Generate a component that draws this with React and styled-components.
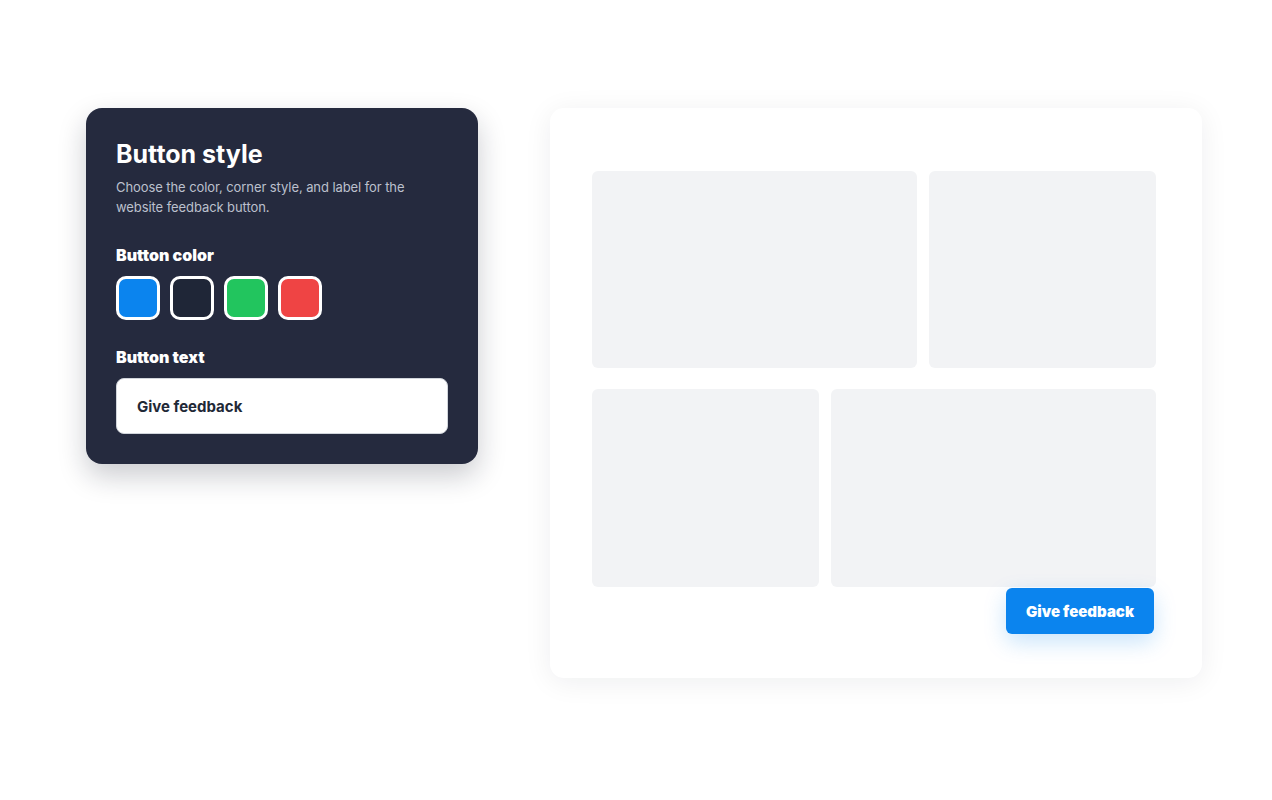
import React, { useState } from "react";
import styled, { createGlobalStyle } from "styled-components";

const GlobalStyle = createGlobalStyle`
  html, body {
    margin: 0;
    padding: 0;
    background: #ffffff;
    font-family: Inter, "Noto Sans", "Liberation Sans", sans-serif;
    -webkit-font-smoothing: antialiased;
  }
  * { box-sizing: border-box; }
`;

const Page = styled.div`
  display: flex;
  align-items: flex-start;
  gap: 72px;
  padding: 108px 0 0 86px;
  min-height: 800px;
`;

const Panel = styled.section`
  width: 392px;
  padding: 30px;
  background: #252a3e;
  border-radius: 16px;
  box-shadow: 0 12px 28px rgba(20, 24, 40, 0.22);
  color: #ffffff;
`;

const Title = styled.h2`
  margin: 0;
  padding-top: 1px;
  font-size: 25px;
  line-height: 30px;
  font-weight: 700;
`;

const Description = styled.p`
  margin: 9px 0 0;
  font-size: 13px;
  line-height: 19.5px;
  letter-spacing: -0.08px;
  color: #bcc0cd;
  font-weight: 400;
`;

const Label = styled.div`
  margin-top: ${(p) => p.$top}px;
  font-size: 16px;
  line-height: 20px;
  font-weight: 900;
`;

const Swatches = styled.div`
  display: flex;
  gap: 10px;
  margin-top: 11px;
`;

const Swatch = styled.button`
  width: 44px;
  height: 44px;
  padding: 0;
  border: 3px solid #ffffff;
  border-radius: 10px;
  background: ${(p) => p.$color};
  cursor: pointer;
`;

const TextInput = styled.input`
  display: block;
  width: 100%;
  height: 56px;
  margin-top: 11px;
  padding: 0 20px;
  border: 1px solid #d1d5db;
  border-radius: 8px;
  background: #ffffff;
  font-family: inherit;
  font-size: 15px;
  font-weight: 700;
  color: #1f2937;
  outline: none;
`;

const Preview = styled.section`
  width: 652px;
  height: 570px;
  padding: 63px 46px 0 42px;
  background: #ffffff;
  border-radius: 14px;
  box-shadow: 0 4px 28px rgba(15, 23, 42, 0.07);
  display: flex;
  flex-direction: column;
`;

const Mock = styled.div`
  display: flex;
  flex-direction: column;
  gap: 21px;
`;

const MockRow = styled.div`
  display: grid;
  grid-template-columns: ${(p) => p.$cols};
  gap: 12px;
  height: ${(p) => p.$h}px;
`;

const Block = styled.div`
  background: #f2f3f5;
  border-radius: 6px;
`;

const ButtonBar = styled.div`
  display: flex;
  justify-content: flex-end;
  padding: 1px 2px 0 0;
`;

const FeedbackButton = styled.button`
  height: 46px;
  width: 148px;
  border: none;
  border-radius: 6px;
  background: ${(p) => p.$color};
  color: #ffffff;
  font-family: inherit;
  font-size: 15px;
  font-weight: 900;
  box-shadow: 0 8px 22px rgba(11, 132, 238, 0.22);
  cursor: pointer;
`;

const colors = ["#0b84ee", "#1f2637", "#22c55e", "#ef4444"];

export default function App() {
  const [color, setColor] = useState(colors[0]);
  const [label, setLabel] = useState("Give feedback");

  return (
    <>
      <GlobalStyle />
      <Page>
        <Panel>
          <Title>Button style</Title>
          <Description>
            Choose the color, corner style, and label for the website feedback button.
          </Description>
          <Label $top={28}>Button color</Label>
          <Swatches>
            {colors.map((c) => (
              <Swatch key={c} $color={c} aria-label={c} onClick={() => setColor(c)} />
            ))}
          </Swatches>
          <Label $top={27}>Button text</Label>
          <TextInput value={label} onChange={(e) => setLabel(e.target.value)} />
        </Panel>

        <Preview>
          <Mock>
            <MockRow $cols="325px 227px" $h={197}>
              <Block />
              <Block />
            </MockRow>
            <MockRow $cols="227px 325px" $h={198}>
              <Block />
              <Block />
            </MockRow>
          </Mock>
          <ButtonBar>
            <FeedbackButton $color={color}>{label}</FeedbackButton>
          </ButtonBar>
        </Preview>
      </Page>
    </>
  );
}
